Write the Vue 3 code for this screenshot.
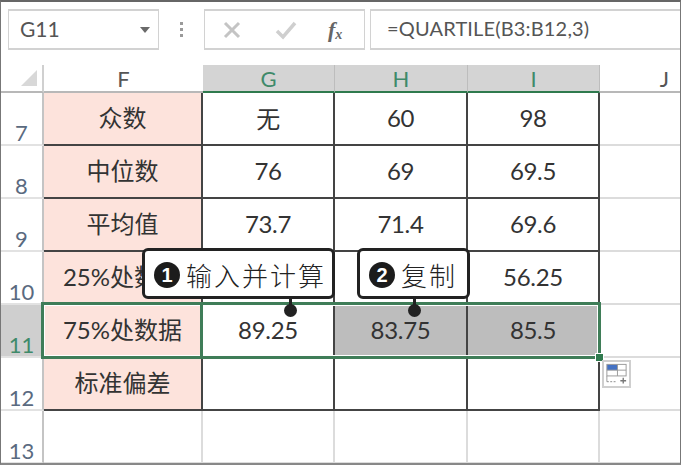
<script setup>
const cols = [
  { name: 'F', on: false },
  { name: 'G', on: true },
  { name: 'H', on: true },
  { name: 'I', on: true },
  { name: 'J', on: false }
]
const rows = [
  { n: 7, cells: ['众数', '无', '60', '98'] },
  { n: 8, cells: ['中位数', '76', '69', '69.5'] },
  { n: 9, cells: ['平均值', '73.7', '71.4', '69.6'] },
  { n: 10, cells: ['25%处数据', '', '', '56.25'] },
  { n: 11, cells: ['75%处数据', '89.25', '83.75', '85.5'], sel: true },
  { n: 12, cells: ['标准偏差', '', '', ''] },
  { n: 13, cells: null }
]
</script>

<template>
  <div class="page">
    <div class="toolbar">
      <div class="namebox">
        <span>G11</span>
        <i class="caret"></i>
      </div>
      <div class="dots"><i></i><i></i><i></i></div>
      <div class="btns">
        <svg width="20" height="20" viewBox="0 0 20 20" class="x"><path d="M3 3L17 17M17 3L3 17" stroke="#c4c4c4" stroke-width="3" fill="none"/></svg>
        <svg width="22" height="20" viewBox="0 0 22 20" class="v"><path d="M2 11L8 17L20 3" stroke="#cfcfcf" stroke-width="3.5" fill="none"/></svg>
        <span class="fx">f<sub>x</sub></span>
      </div>
      <div class="formula">=QUARTILE(B3:B12,3)</div>
    </div>

    <div class="sheet">
      <div class="corner"><i></i></div>
      <div v-for="c in cols" :key="c.name" class="colhead" :class="{ on: c.on, last: c.name === 'J' }">{{ c.name }}</div>

      <template v-for="r in rows" :key="r.n">
        <div class="rowhead" :class="{ on: r.sel }">{{ r.n }}</div>
        <template v-if="r.cells">
          <div
            v-for="(t, i) in r.cells"
            :key="i"
            class="cell"
            :class="{ label: i === 0, grey: r.sel && i > 1 }"
          >{{ t }}</div>
          <div class="cell plain"></div>
        </template>
        <template v-else>
          <div v-for="i in 5" :key="i" class="cell plain"></div>
        </template>
      </template>

      <div class="selection"><i class="divider"></i><i class="handle"></i></div>

      <div class="paste">
        <svg width="26" height="26" viewBox="0 0 26 26">
          <rect x="3" y="3" width="11" height="6" fill="#4472c4"/>
          <rect x="3" y="3" width="20" height="12" fill="none" stroke="#9a9a9a"/>
          <path d="M3 9H23M14 3V15M3 15V21" stroke="#9a9a9a" fill="none"/>
          <path d="M3 21H13" stroke="#8a8a8a" stroke-dasharray="2 1.5"/>
          <path d="M17 20H23M20 17V23" stroke="#777" stroke-width="1.4"/>
        </svg>
      </div>

      <div class="callout one">
        <span class="num">1</span><span class="txt">输入并计算</span>
        <i class="stem"></i><i class="dot"></i>
      </div>
      <div class="callout two">
        <span class="num">2</span><span class="txt">复制</span>
        <i class="stem"></i><i class="dot"></i>
      </div>
    </div>
  </div>
</template>

<style scoped>
.page {
  width: 681px;
  height: 465px;
  box-sizing: border-box;
  overflow: hidden;
  background: #fff;
  border-top: 2px solid #666;
  border-left: 1px solid #777;
  border-right: 1px solid #777;
  border-bottom: 2px solid #888;
  font-family: Lato, "Noto Sans CJK SC", sans-serif;
  color: #333;
  display: flex;
  flex-direction: column;
}
.toolbar {
  height: 63px;
  flex: none;
  display: flex;
  align-items: flex-start;
  padding: 7px 0 0 7px;
  box-sizing: border-box;
}
.namebox,
.btns,
.formula {
  height: 41px;
  box-sizing: border-box;
  border: 1px solid #d2d2d2;
  border-width: 2px 1px 2px 1px;
  display: flex;
  align-items: center;
}
.namebox {
  width: 151px;
  padding: 0 8px 3px 11px;
  justify-content: space-between;
  font-size: 21px;
  color: #555;
}
.caret {
  width: 0;
  height: 0;
  margin-top: 3px;
  border-left: 5px solid transparent;
  border-right: 5px solid transparent;
  border-top: 6px solid #6a6a6a;
}
.dots {
  width: 45px;
  height: 41px;
  display: flex;
  flex-direction: column;
  justify-content: center;
  align-items: center;
  gap: 3px;
}
.dots i {
  width: 3px;
  height: 3px;
  background: #9a9a9a;
}
.btns {
  width: 161px;
  padding-left: 17px;
}
.x { margin-right: 33px; }
.v { margin-right: 31px; }
.fx {
  font-family: "Liberation Serif", serif;
  font-style: italic;
  font-weight: bold;
  font-size: 22px;
  color: #666;
}
.fx sub { font-size: 14px; vertical-align: -2px; }
.formula {
  margin-left: 5px;
  flex: 1;
  border-right: 0;
  padding: 0 0 3px 16px;
  font-size: 20px;
  letter-spacing: 0.16px;
  color: #555;
}
.sheet {
  position: relative;
  display: grid;
  grid-template-columns: 43px 159px 132px 133px 132px 80px;
  grid-template-rows: 28px repeat(7, 53px);
  flex: none;
}
.corner {
  background: #fff;
  border-right: 2px solid #d0d0d0;
  border-bottom: 2px solid #b8b8b8;
  box-sizing: border-box;
  position: relative;
}
.corner i {
  position: absolute;
  right: 5px;
  bottom: 5px;
  width: 0;
  height: 0;
  border-left: 16px solid transparent;
  border-bottom: 16px solid #d8d8d8;
}
.colhead {
  box-sizing: border-box;
  display: flex;
  justify-content: center;
  align-items: center;
  font-size: 22px;
  color: #555;
  border-bottom: 2px solid #b8b8b8;
  padding-top: 1px;
}
.colhead.last {
  justify-content: flex-end;
  padding-right: 11px;
}
.colhead.on {
  background: #d4d4d4;
  color: #3f8a6a;
  border-bottom-color: #2f7a4e;
  border-right: 1px solid #bdbdbd;
}
.rowhead {
  box-sizing: border-box;
  border-right: 2px solid #c4c4c4;
  border-bottom: 2px solid #e2e2e2;
  display: flex;
  justify-content: center;
  align-items: flex-end;
  font-size: 22px;
  line-height: 22px;
  color: #5a6a80;
}
.rowhead.on {
  background: #cfcfcf;
  color: #3f8a6a;
}
.cell {
  box-sizing: border-box;
  border-right: 2px solid #444;
  border-bottom: 2px solid #444;
  padding-bottom: 2px;
  display: flex;
  justify-content: center;
  align-items: center;
  font-size: 24px;
  letter-spacing: -0.3px;
  color: #333;
  background: #fff;
}
.label {
  background: #fde3dc;
  padding-bottom: 4px;
  letter-spacing: 0;
}
.grey { background: #bdbdbd; }
.plain {
  border-right: 2px solid #dcdcdc;
  border-bottom: 2px solid #dcdcdc;
}
.plain:nth-child(6n + 6) { border-right: 0; }
.selection {
  position: absolute;
  left: 40px;
  top: 237px;
  width: 560px;
  height: 57px;
  box-sizing: border-box;
  border: 3px solid #3f7d58;
  box-shadow: inset 0 0 0 1px #fff;
  pointer-events: none;
}
.divider {
  position: absolute;
  left: 156px;
  top: 0;
  bottom: 0;
  width: 3px;
  background: #3f7d58;
}
.handle {
  position: absolute;
  right: -6px;
  bottom: -6px;
  width: 9px;
  height: 9px;
  box-sizing: border-box;
  background: #2f7a4e;
  border: 1px solid #fff;
}
.paste {
  position: absolute;
  left: 601px;
  top: 295px;
  width: 29px;
  height: 28px;
  box-sizing: border-box;
  border: 2px solid #cfcfcf;
  background: #fff;
  display: flex;
  align-items: center;
  justify-content: center;
}
.callout {
  position: absolute;
  top: 183px;
  height: 51px;
  box-sizing: border-box;
  border: 3px solid #222;
  border-radius: 6px;
  background: #fff;
  display: flex;
  align-items: center;
  padding: 3px 0 0 9px;
}
.one { left: 141px; width: 193px; }
.two { left: 356px; width: 113px; }
.num {
  width: 26px;
  height: 26px;
  border-radius: 50%;
  background: #1c1c1c;
  color: #fff;
  font-family: "Liberation Sans", sans-serif;
  font-weight: bold;
  font-size: 20px;
  display: flex;
  align-items: center;
  justify-content: center;
  flex: none;
}
.txt {
  font-family: "Noto Sans CJK SC", sans-serif;
  font-size: 26px;
  font-weight: 300;
  letter-spacing: 2px;
  margin-left: 6px;
  color: #222;
  line-height: 1;
}
.stem {
  position: absolute;
  top: 100%;
  width: 3px;
  height: 11px;
  background: #222;
}
.dot {
  position: absolute;
  top: calc(100% + 8px);
  width: 13px;
  height: 13px;
  border-radius: 50%;
  background: #222;
}
.one .stem { left: 144px; }
.one .dot { left: 139px; }
.two .stem { left: 53px; }
.two .dot { left: 48px; }
</style>
